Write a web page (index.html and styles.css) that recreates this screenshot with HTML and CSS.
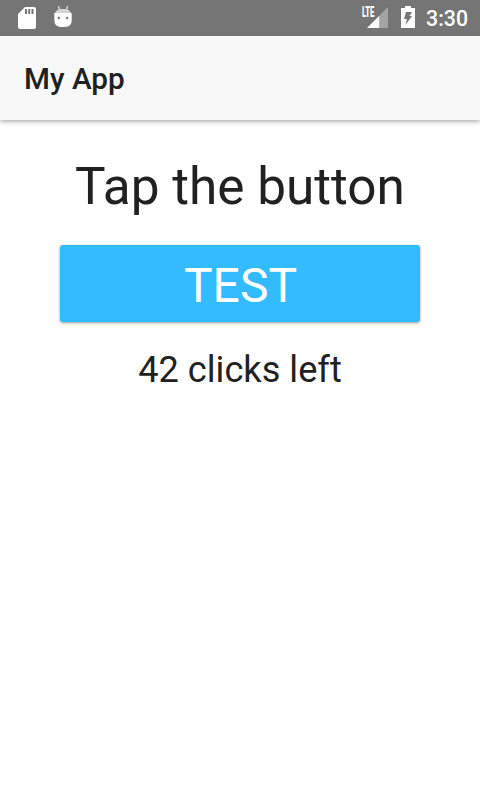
FILE: index.html
```html
<!DOCTYPE html>
<html lang="en">
<head>
<meta charset="utf-8">
<title>My App</title>
<link rel="stylesheet" href="styles.css">
</head>
<body>
<div class="status">
  <div class="status-left">
    <svg class="sd" width="18" height="22" viewBox="0 0 18 22"><path fill="#fff" fill-rule="evenodd" d="M7 0H16Q18 0 18 2V20Q18 22 16 22H2Q0 22 0 20V7ZM7 2V7H9V2ZM10.200 2V7H12.200V2ZM13.500 2V7H15.500V2Z"/></svg>
    <svg class="droid" width="18" height="22" viewBox="0 0 18 22"><path stroke="#ddd" stroke-width="1.300" d="M4.500 0L5.500 4M13.500 0L12.500 4"/><path fill="#fff" d="M0.300 7H17.700V14Q17.700 21 11 21H7Q0.300 21 0.300 14Z"/><path fill="#d5d5d5" d="M1 7Q3 3 7 3H11Q15 3 17 7Z"/><circle cx="4.800" cy="12" r="1.200" fill="#757575"/><circle cx="13.200" cy="12" r="1.200" fill="#757575"/></svg>
  </div>
  <div class="status-right">
    <span class="lte">LTE</span>
    <svg class="signal" width="21" height="21" viewBox="0 0 21 21"><path fill="#a3a3a3" d="M21 0V21H12.300V8.700Z"/><path fill="#fff" d="M12.300 8.700V21H0Z"/></svg>
    <svg class="battery" width="14" height="22" viewBox="0 0 14 22"><path fill="#fff" d="M4 0H10V2H14V22H0V2H4Z"/><path fill="#757575" d="M5 6H11L8.500 10H11L4.500 19L6 13H3Z"/></svg>
    <span class="clock">3:30</span>
  </div>
</div>
<header class="toolbar"><h1>My App</h1></header>
<main>
  <p class="title">Tap the button</p>
  <button class="button">TEST</button>
  <p class="count">42 clicks left</p>
</main>
</body>
</html>
```

FILE: styles.css
```css
* { box-sizing: border-box; }
body { margin: 0; height: 800px; background: #fff; color: #212121; font-family: Roboto, sans-serif; overflow: hidden; }
.status { position: relative; z-index: 1; height: 36px; background: #757575; color: #fff; display: flex; justify-content: space-between; padding: 0 12px 0 18px; }
.status-left, .status-right { display: flex; }
.sd { margin-top: 7px; }
.droid { margin: 6px 0 0 18px; }
.lte { font: 900 14px/16px Roboto, sans-serif; margin-top: 4px; width: 5px; white-space: nowrap; transform: scaleX(.54); transform-origin: 0 0; }
.signal { margin-top: 7px; }
.battery { margin: 6px 11px 0 13px; }
.clock { font-size: 21.300px; font-weight: 500; line-height: 38px; }
.toolbar { height: 84px; background: #f8f8f8; padding-left: 24px; display: flex; align-items: center; box-shadow: 0 1px 5px rgba(0,0,0,.4); }
h1 { margin: 0; font-size: 29.700px; font-weight: 500; }
main { padding: 37px 60px; display: flex; flex-direction: column; text-align: center; }
p { margin: 0; }
.title { font-size: 51.300px; line-height: 60px; }
.button { margin-top: 28px; height: 77px; border: 0; border-radius: 3px; background: #33bbff; color: #fff; font: 48px/73px Roboto, sans-serif; padding: 4px 0 0 1px; box-shadow: 0 1px 3px rgba(0,0,0,.4); }
.count { margin-top: 27px; font-size: 36.200px; line-height: 42px; }
```
